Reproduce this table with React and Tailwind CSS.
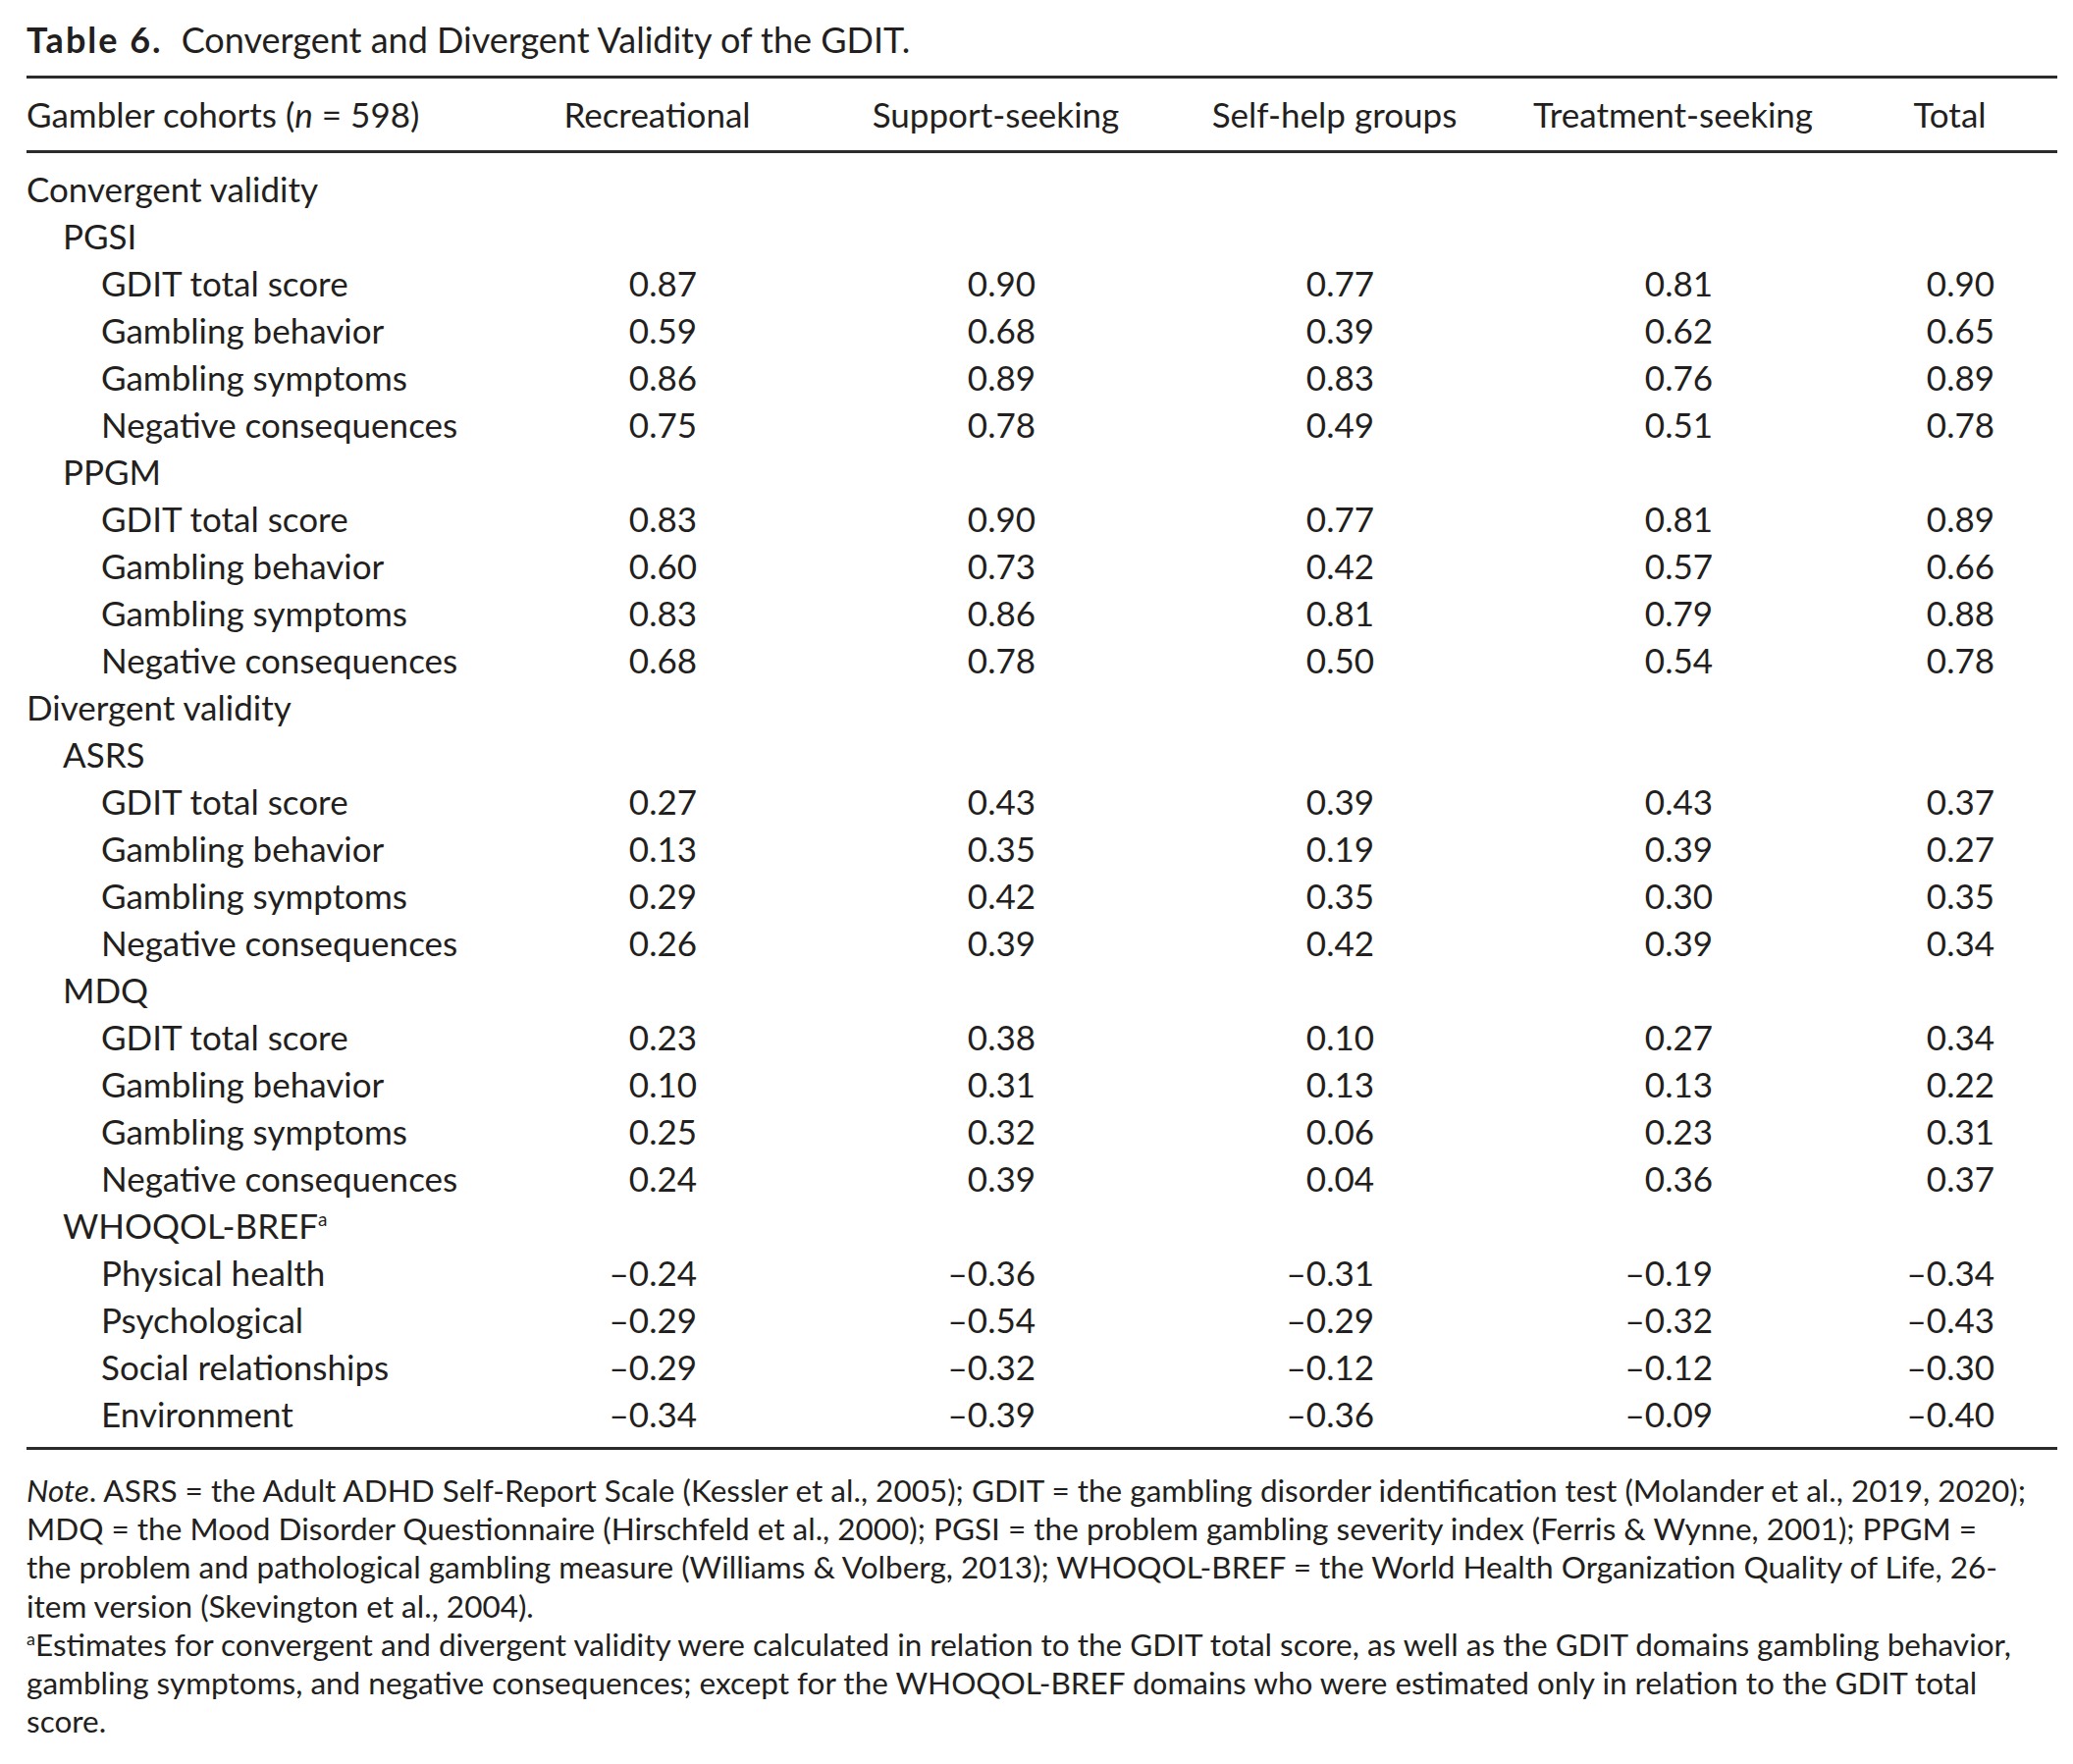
const headers = ["Recreational", "Support-seeking", "Self-help groups", "Treatment-seeking", "Total"];

// [label, level, values, sup]
const rows = [
  ["Convergent validity", 0],
  ["PGSI", 1],
  ["GDIT total score", 2, ["0.87", "0.90", "0.77", "0.81", "0.90"]],
  ["Gambling behavior", 2, ["0.59", "0.68", "0.39", "0.62", "0.65"]],
  ["Gambling symptoms", 2, ["0.86", "0.89", "0.83", "0.76", "0.89"]],
  ["Negative consequences", 2, ["0.75", "0.78", "0.49", "0.51", "0.78"]],
  ["PPGM", 1],
  ["GDIT total score", 2, ["0.83", "0.90", "0.77", "0.81", "0.89"]],
  ["Gambling behavior", 2, ["0.60", "0.73", "0.42", "0.57", "0.66"]],
  ["Gambling symptoms", 2, ["0.83", "0.86", "0.81", "0.79", "0.88"]],
  ["Negative consequences", 2, ["0.68", "0.78", "0.50", "0.54", "0.78"]],
  ["Divergent validity", 0],
  ["ASRS", 1],
  ["GDIT total score", 2, ["0.27", "0.43", "0.39", "0.43", "0.37"]],
  ["Gambling behavior", 2, ["0.13", "0.35", "0.19", "0.39", "0.27"]],
  ["Gambling symptoms", 2, ["0.29", "0.42", "0.35", "0.30", "0.35"]],
  ["Negative consequences", 2, ["0.26", "0.39", "0.42", "0.39", "0.34"]],
  ["MDQ", 1],
  ["GDIT total score", 2, ["0.23", "0.38", "0.10", "0.27", "0.34"]],
  ["Gambling behavior", 2, ["0.10", "0.31", "0.13", "0.13", "0.22"]],
  ["Gambling symptoms", 2, ["0.25", "0.32", "0.06", "0.23", "0.31"]],
  ["Negative consequences", 2, ["0.24", "0.39", "0.04", "0.36", "0.37"]],
  ["WHOQOL-BREF", 1, null, true],
  ["Physical health", 2, ["–0.24", "–0.36", "–0.31", "–0.19", "–0.34"]],
  ["Psychological", 2, ["–0.29", "–0.54", "–0.29", "–0.32", "–0.43"]],
  ["Social relationships", 2, ["–0.29", "–0.32", "–0.12", "–0.12", "–0.30"]],
  ["Environment", 2, ["–0.34", "–0.39", "–0.36", "–0.09", "–0.40"]],
];

const indent = ["pl-0", "pl-[37px]", "pl-[76px]"];
const grid = "grid grid-cols-[470px_345px_345px_345px_345px_219px]";

function Row({ label, level, values, sup }) {
  return (
    <div className={`${grid} h-[48px] items-center`}>
      <div className={indent[level]}>
        {label}
        {sup && <sup className="text-[19px] -top-[13px]">a</sup>}
      </div>
      {values &&
        values.map((v, i) => (
          <div key={i} className={`text-right ${i === 4 ? "pr-[64px]" : "pr-[132px]"}`}>
            {v}
          </div>
        ))}
    </div>
  );
}

export default function App() {
  return (
    <div className="w-[2112px] min-h-[1797px] bg-white text-[#231f20] font-['Lato',sans-serif] pl-[27px] pt-[16px]">
      {/* Titel */}
      <div className="h-[48px] leading-[48px] text-[36px]">
        <span className="font-bold tracking-[2px]">Table 6.</span>
        <span className="ml-[19px]">Convergent and Divergent Validity of the GDIT.</span>
      </div>

      <div className="w-[2069px] text-[35px]">
        <div className="mt-[13px] h-[3px] bg-[#2b2b2b]" />
        <div className={`${grid} h-[73px] items-center`}>
          <div>
            Gambler cohorts (<span className="italic">n</span> = 598)
          </div>
          {headers.map((h) => (
            <div key={h} className="text-center">
              {h}
            </div>
          ))}
        </div>
        <div className="h-[3px] bg-[#2b2b2b]" />

        <div className="mt-[10px]">
          {rows.map(([label, level, values, sup], i) => (
            <Row key={i} label={label} level={level} values={values} sup={sup} />
          ))}
        </div>

        <div className="mt-[12px] h-[3px] bg-[#2b2b2b]" />
      </div>

      {/* Fussnoten */}
      <div className="mt-[22px] text-[31.5px] leading-[39.2px] whitespace-nowrap">
        <div>
          <span className="italic">Note</span>. ASRS = the Adult ADHD Self-Report Scale (Kessler et al., 2005); GDIT = the gambling disorder identification test (Molander et al., 2019, 2020);
        </div>
        <div>
          MDQ = the Mood Disorder Questionnaire (Hirschfeld et al., 2000); PGSI = the problem gambling severity index (Ferris &amp; Wynne, 2001); PPGM =
        </div>
        <div>
          the problem and pathological gambling measure (Williams &amp; Volberg, 2013); WHOQOL-BREF = the World Health Organization Quality of Life, 26-
        </div>
        <div>item version (Skevington et al., 2004).</div>
        <div>
          <sup className="text-[18px] -top-[11px]">a</sup>Estimates for convergent and divergent validity were calculated in relation to the GDIT total score, as well as the GDIT domains gambling behavior,
        </div>
        <div>
          gambling symptoms, and negative consequences; except for the WHOQOL-BREF domains who were estimated only in relation to the GDIT total
        </div>
        <div>score.</div>
      </div>
    </div>
  );
}
